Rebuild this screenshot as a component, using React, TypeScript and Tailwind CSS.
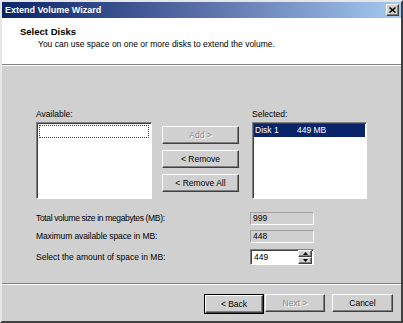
import React from "react";

const raised =
  "border border-t-white border-l-white border-r-[#404040] border-b-[#404040] shadow-[inset_-1px_-1px_0_#808080]";
const sunken =
  "border border-t-[#808080] border-l-[#808080] border-r-white border-b-white shadow-[inset_1px_1px_0_#404040]";

function Btn({
  children,
  disabled,
  className,
}: {
  children: React.ReactNode;
  disabled?: boolean;
  className?: string;
}) {
  return (
    <div
      className={
        "h-[18px] flex items-center justify-center bg-[#d0d0d0] " +
        raised +
        " " +
        (disabled
          ? "text-[#8a8a8a] [text-shadow:1px_1px_0_#ffffff] "
          : "text-black ") +
        (className ?? "")
      }
    >
      {children}
    </div>
  );
}

function Arrow({ up }: { up?: boolean }) {
  return (
    <div
      className={
        "w-[14px] h-[7px] flex items-center justify-center bg-[#d0d0d0] " +
        raised
      }
    >
      <svg width="5" height="3" viewBox="0 0 5 3">
        {up ? (
          <polygon points="2.5,0 5,3 0,3" fill="#000" />
        ) : (
          <polygon points="0,0 5,0 2.5,3" fill="#000" />
        )}
      </svg>
    </div>
  );
}

export default function App() {
  return (
    <div
      className="w-[403px] h-[323px] bg-[#d0d0d0] border-2 border-t-[#e6e6e6] border-l-[#e6e6e6] border-r-[#404040] border-b-[#404040] flex flex-col overflow-hidden text-[8.5px] leading-[11px] text-black"
      style={{ fontFamily: '"Liberation Sans", Arial, sans-serif' }}
    >
      {/* Title bar */}
      <div className="h-[16px] shrink-0 flex items-center bg-linear-to-r from-[#0a246a] via-[#5a6fa8] to-[#a6caf0]">
        <span className="pl-[3px] text-white font-bold text-[9px] leading-[16px]">
          Extend Volume Wizard
        </span>
        <div className="ml-auto mr-[2px]">
          <div
            className={
              "w-[13px] h-[12px] flex items-center justify-center bg-[#d0d0d0] " +
              raised
            }
          >
            <svg width="7" height="6" viewBox="0 0 7 6">
              <path
                d="M0.5 0.5 L6.5 5.5 M6.5 0.5 L0.5 5.5"
                stroke="#000"
                strokeWidth="1.5"
              />
            </svg>
          </div>
        </div>
      </div>

      {/* Header */}
      <div className="h-[47px] shrink-0 bg-white border-b border-b-[#808080] pl-[18px] pt-[8px]">
        <div className="font-bold text-[9.5px] leading-[12px]">Select Disks</div>
        <div className="pl-[18px] pt-[1px]">
          You can use space on one or more disks to extend the volume.
        </div>
      </div>
      <div className="h-px shrink-0 bg-white" />

      {/* Body */}
      <div className="flex-1 pl-[34px] pt-[43px]">
        <div className="flex">
          <div className="w-[116px]">
            <div className="h-[13px]">Available:</div>
            <div className={"h-[77px] bg-white p-[1px] " + sunken}>
              <div className="h-[13px] m-[1px] border border-dotted border-[#404040]" />
            </div>
          </div>
          <div className="w-[77px] ml-[10px] pt-[17px] flex flex-col gap-[6px]">
            <Btn disabled>Add &gt;</Btn>
            <Btn>&lt; Remove</Btn>
            <Btn>&lt; Remove All</Btn>
          </div>
          <div className="w-[115px] ml-[13px]">
            <div className="h-[13px]">Selected:</div>
            <div className={"h-[77px] bg-white p-[1px] " + sunken}>
              <div className="h-[13px] bg-[#0a246a] text-white flex items-center pl-[1px] leading-[13px]">
                <span className="w-[42px]">Disk 1</span>
                <span>449 MB</span>
              </div>
            </div>
          </div>
        </div>

        <div className="mt-[13px] flex flex-col">
          <div className="flex items-center h-[13px]">
            <span className="w-[214px] tracking-[-0.35px]">
              Total volume size in megabytes (MB):
            </span>
            <div className="w-[64px] h-[13px] border border-t-[#a0a0a0] border-l-[#a0a0a0] border-r-white border-b-white bg-[#d0d0d0] pl-[2px] leading-[11px]">
              999
            </div>
          </div>
          <div className="flex items-center h-[13px] mt-[5px]">
            <span className="w-[214px] tracking-[-0.1px]">
              Maximum available space in MB:
            </span>
            <div className="w-[64px] h-[13px] border border-t-[#a0a0a0] border-l-[#a0a0a0] border-r-white border-b-white bg-[#d0d0d0] pl-[2px] leading-[11px]">
              448
            </div>
          </div>
          <div className="flex items-center h-[16px] mt-[6px]">
            <span className="w-[214px]">Select the amount of space in MB:</span>
            <div
              className={
                "w-[64px] h-[16px] bg-white flex items-center pl-[2px] pr-[1px] " +
                sunken
              }
            >
              <span className="flex-1 pl-[1px]">449</span>
              <div className="flex flex-col">
                <Arrow up />
                <Arrow />
              </div>
            </div>
          </div>
        </div>
      </div>

      {/* Footer */}
      <div className="h-[38px] shrink-0 border-t border-t-[#808080]">
        <div className="h-px bg-white" />
        <div className="flex pl-[202px] pt-[9px]">
          <div className="border border-black">
            <Btn className="w-[58px] h-[16px]">&lt; Back</Btn>
          </div>
          <Btn disabled className="w-[60px] ml-[1px]">
            Next &gt;
          </Btn>
          <Btn className="w-[61px] ml-[7px]">Cancel</Btn>
        </div>
      </div>
    </div>
  );
}
